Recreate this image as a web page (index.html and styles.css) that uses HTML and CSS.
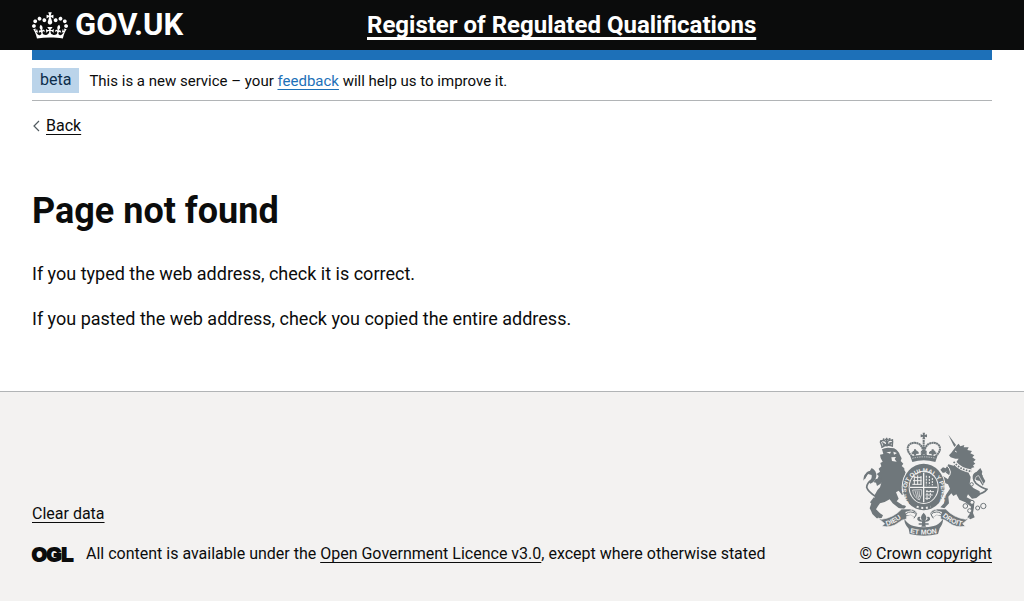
FILE: index.html
```html
<!DOCTYPE html>
<html lang="en">
<head>
<meta charset="utf-8">
<meta name="viewport" content="width=device-width, initial-scale=1">
<title>Page not found – Register of Regulated Qualifications</title>
<link rel="stylesheet" href="styles.css">
</head>
<body>
<header class="header">
  <div class="container header-row">
    <a class="logo" href="#" aria-label="GOV.UK">
      <svg class="crown" viewBox="0 0 132 97" width="36" height="27" aria-hidden="true"><path fill="currentColor" d="M25 30.2c3.5 1.5 7.7-.2 9.1-3.7 1.5-3.6-.2-7.8-3.9-9.2-3.6-1.4-7.6.3-9.1 3.9-1.4 3.5.3 7.5 3.9 9zM9 39.5c3.6 1.5 7.8-.2 9.2-3.7 1.5-3.6-.2-7.8-3.9-9.1-3.6-1.5-7.6.2-9.1 3.8-1.4 3.5.3 7.5 3.8 9zM4.4 57.2c3.5 1.5 7.7-.2 9.1-3.8 1.5-3.6-.2-7.7-3.9-9.1-3.5-1.5-7.6.3-9.1 3.8-1.4 3.5.3 7.6 3.9 9.1zm38.3-21.4c3.5 1.5 7.7-.2 9.1-3.8 1.5-3.6-.2-7.7-3.9-9.1-3.6-1.5-7.6.3-9.1 3.8-1.3 3.6.4 7.7 3.9 9.1zm64.4-5.6c-3.6 1.5-7.8-.2-9.1-3.7-1.5-3.6.2-7.8 3.8-9.2 3.6-1.4 7.7.3 9.2 3.9 1.3 3.5-.4 7.5-3.9 9zm15.9 9.3c-3.6 1.5-7.7-.2-9.1-3.7-1.5-3.6.2-7.8 3.7-9.1 3.6-1.5 7.7.2 9.2 3.8 1.5 3.5-.3 7.5-3.8 9zm4.7 17.7c-3.6 1.5-7.8-.2-9.2-3.8-1.5-3.6.2-7.7 3.9-9.1 3.6-1.5 7.7.3 9.2 3.8 1.3 3.5-.4 7.6-3.9 9.1zM89.3 35.8c-3.6 1.5-7.8-.2-9.2-3.8-1.4-3.6.2-7.7 3.9-9.1 3.6-1.5 7.7.3 9.2 3.8 1.4 3.6-.3 7.7-3.9 9.1zM69.7 17.7l8.9 4.7V9.3l-8.9 2.8c-.2-.3-.5-.6-.9-.9L72.4 0H59.6l3.5 11.2c-.3.3-.6.5-.9.9l-8.8-2.8v13.1l8.8-4.7c.3.3.6.7.9.9l-5 15.4v.1c-.2.8-.4 1.6-.4 2.4 0 4.1 3.1 7.5 7 8.1h.2c.3 0 .7.1 1 .1.4 0 .7 0 1-.1h.2c4-.6 7.1-4.1 7.1-8.1 0-.8-.1-1.7-.4-2.4V34l-5.1-15.4c.4-.2.7-.6 1-.9zM66 92.8c16.9 0 32.8 1.1 47.1 3.2 4-16.9 8.9-26.7 14-33.5l-9.6-3.4c1 4.9 1.1 7.2 0 10.2-1.5-1.4-3-4.3-4.2-8.7L108.6 76c2.8-2 5-3.2 7.5-3.3-4.4 9.4-10 11.9-13.6 11.2-4.3-.8-6.3-4.6-5.6-7.9 1-4.7 5.7-5.9 8-.5 4.3-8.7-3-11.4-7.6-8.8 7.1-7.2 7.9-13.5 2.1-21.1-8 6.1-8.1 12.3-4.5 20.8-4.7-5.4-12.1-2.5-9.5 6.2 3.4-5.2 7.9-2 7.2 3.1-.6 4.3-6.4 7.8-13.5 7.2-10.3-.9-10.9-8-11.2-13.8 2.5-.5 7.1 1.8 11 7.3L80.2 60c-4.1 4.4-8 5.3-12.3 5.4 1.4-4.4 8-11.6 8-11.6H55.5s6.4 7.2 7.9 11.6c-4.2-.1-8-1-12.3-5.4l1.4 16.4c3.9-5.5 8.5-7.7 10.9-7.3-.3 5.8-.9 12.8-11.1 13.8-7.2.6-12.9-2.9-13.5-7.2-.7-5 3.8-8.3 7.1-3.1 2.7-8.7-4.6-11.6-9.4-6.2 3.7-8.5 3.6-14.7-4.6-20.8-5.8 7.6-5 13.9 2.2 21.1-4.7-2.6-11.9.1-7.7 8.8 2.3-5.5 7.1-4.2 8.1.5.7 3.3-1.3 7.1-5.7 7.9-3.5.7-9-1.8-13.5-11.2 2.5.1 4.7 1.3 7.5 3.3l-4.7-15.4c-1.2 4.4-2.7 7.2-4.3 8.7-1.1-3-.9-5.3 0-10.2l-9.5 3.4c5 6.9 9.9 16.7 14 33.5 14.8-2.1 30.8-3.2 47.7-3.2z"/></svg>
      <span>GOV.UK</span>
    </a>
    <a class="service" href="#">Register of Regulated Qualifications</a>
  </div>
</header>
<div class="container page">
  <div class="accent"></div>
  <div class="phase">
    <strong class="tag">beta</strong>
    <span>This is a new service – your <a class="link" href="#">feedback</a> will help us to improve it.</span>
  </div>
  <a class="back" href="#">
    <svg viewBox="0 0 8 12" width="8" height="12" aria-hidden="true"><path d="M7 1 2 6l5 5" fill="none" stroke="#505a5f" stroke-width="1.2"/></svg>
    <span class="underlined">Back</span>
  </a>
  <main class="main">
    <h1>Page not found</h1>
    <p>If you typed the web address, check it is correct.</p>
    <p>If you pasted the web address, check you copied the entire address.</p>
  </main>
</div>
<footer class="footer">
  <div class="container footer-row">
    <div class="meta">
      <a class="underlined" href="#">Clear data</a>
      <div class="licence">
        <svg class="ogl" viewBox="0 0 41 17" width="41" height="17" role="img" aria-label="OGL"><text x="0" y="15">OGL</text></svg>
        <span>All content is available under the <a class="underlined" href="#">Open Government Licence v3.0</a>, except where otherwise stated</span>
      </div>
    </div>
    <a class="copyright" href="#">
      <svg class="crest" viewBox="27 18 375 312" width="125" height="104" aria-hidden="true">
        <defs>
          <path id="garter" d="M176 246A53 60 0 1 1 243 246"/>
          <path id="ribbon-left" d="M98 300Q124 293 152 268"/>
          <path id="ribbon-mid" d="M167 321Q210 330 254 321"/>
          <path id="ribbon-right" d="M265 271Q292 295 328 301"/>
        </defs>
        <!-- lion -->
        <path fill="currentColor" d="M84 70Q95 62 120 67Q134 74 138 88L143 97L140 105L148 113L143 120L151 127Q150 134 155 139L150 158L146 178Q151 190 152 204L144 207L134 194L126 199L134 218L128 226L146 238Q155 236 156 242L150 249L134 246L116 232L107 220Q96 228 78 232L72 240L66 250L78 262L87 268L83 276L68 277L55 264L51 254L47 247L51 235L63 219L62 207Q70 190 78 184L82 170L70 160L74 150L68 144L78 137L74 128L82 121L79 111L86 107L80 96L78 86L88 84Z"/>
        <path fill="none" stroke="currentColor" stroke-width="5" d="M66 212Q42 198 38 184Q39 170 53 162Q62 157 57 145Q47 132 39 142L31 158"/>
        <path fill="currentColor" d="M53 126Q68 133 67 151Q64 168 49 173L44 168Q55 159 53 147L42 144L28 164L30 150Q35 139 46 137Z"/>
        <path fill="currentColor" d="M60 213L48 229L53 234L68 221ZM83 155L64 160L59 169L66 170L69 180L82 172ZM144 179L158 187L160 194L148 196L133 186Z"/>
        <path fill="#f3f2f1" d="M97 79L111 77L108 83ZM118 77L129 81L120 86ZM112 94L126 93L122 99L128 107L114 105Z"/>
        <path fill="none" stroke="currentColor" stroke-width="4" d="M82 65Q98 54 117 61M84 62L79 48Q85 40 96 46L99 57L102 45Q112 39 116 46L115 59M98 35V48M93 40H104M86 57L112 54M84 50L92 54M106 51L114 50"/>
        <g fill="currentColor"><circle cx="81" cy="45" r="3"/><circle cx="89" cy="40" r="3"/><circle cx="107" cy="39" r="3"/><circle cx="115" cy="42" r="3"/></g>
        <!-- unicorn -->
        <path fill="currentColor" d="M283 26L306 57L301 63ZM302 67L309 58L314 53L319 61L331 57L329 64L344 64L340 72L354 75L349 82L361 88L355 94L365 101L358 107L364 113L357 118L361 124L352 126L354 139L343 139L350 153L347 174L358 186L377 196L378 207L367 216L354 218L342 205L338 214L361 226L360 244L357 261L362 274L349 280L340 274L347 264L351 242L334 229L316 221L307 205L298 210L292 202L283 212L285 232L271 247L259 244L270 232L271 214L288 188L282 175L267 169L258 157L268 151L282 160L286 148L276 140L266 140L259 131L267 124L275 127L283 115L299 119L305 111L314 98L304 98L290 94L285 88L292 80Z"/>
        <path fill="none" stroke="currentColor" stroke-width="5" d="M363 208Q391 202 399 190Q384 186 366 172Q351 155 365 143Q378 133 384 151"/>
        <path fill="currentColor" d="M368 137L379 126L385 137L383 145L390 158L394 165L386 179L377 165L363 161L356 153Q355 142 368 137Z"/>
        <path fill="none" stroke="#f3f2f1" stroke-width="2" d="M365 165Q362 150 374 149L388 174"/>
        <path fill="none" stroke="#f3f2f1" stroke-width="11" d="M299 107Q320 133 354 136"/>
        <path fill="none" stroke="currentColor" stroke-width="5" stroke-dasharray="5 4" d="M299 107Q320 133 354 136"/>
        <path fill="none" stroke="#f3f2f1" stroke-width="3" d="M303 75L308 78M277 116Q300 140 280 156M264 150L276 137M258 170L284 184"/>
        <g fill="#f3f2f1" stroke="currentColor" stroke-width="3"><circle cx="334" cy="240" r="7"/><circle cx="347" cy="254" r="6"/><circle cx="354" cy="229" r="6"/><circle cx="353" cy="175" r="5"/><circle cx="371" cy="246" r="6"/><circle cx="388" cy="240" r="8"/></g>
        <!-- shield and garter -->
        <ellipse cx="209" cy="183" rx="66" ry="73" fill="#f3f2f1"/>
        <ellipse cx="209" cy="183" rx="63" ry="70" fill="currentColor"/>
        <ellipse cx="209" cy="184" rx="45" ry="50" fill="#f3f2f1"/>
        <ellipse cx="209" cy="184" rx="42" ry="47" fill="currentColor"/>
        <path fill="none" stroke="#f3f2f1" stroke-width="4" d="M209 140V229M168 184H250"/>
        <path fill="none" stroke="#f3f2f1" stroke-width="3" d="M179 154H202M177 164H203M175 175H203M181 154V176M191 148V176M201 150V176M216 197H240M215 207H236M214 217H228"/>
        <path fill="none" stroke="#f3f2f1" stroke-width="3" stroke-dasharray="6 3" d="M217 149V178M226 150V178M235 156V178M219 192V222M229 192V215"/>
        <path fill="none" stroke="#f3f2f1" stroke-width="2" d="M176 192Q178 214 196 222L203 205V191ZM183 194L189 215M189 194L194 218M195 194L197 213"/>
        <path fill="none" stroke="#f3f2f1" stroke-width="6" stroke-dasharray="6 8" d="M188 242Q209 250 230 242"/>
        <text class="motto garter"><textPath href="#garter" startOffset="2">HONI SOIT QUI MAL Y PENSE</textPath></text>
        <!-- crown -->
        <path fill="currentColor" d="M169 91Q209 81 250 91L244 108Q209 98 175 108ZM206 20H213L212 27L219 25V34L212 32L214 40H205L207 32L200 34V25L207 27Z"/>
        <path fill="none" stroke="currentColor" stroke-width="6" stroke-dasharray="6 1" d="M174 91Q155 73 164 58Q174 47 191 52Q205 57 208 78M245 91Q264 73 255 58Q245 47 228 52Q214 57 211 78M209 42V85"/>
        <path fill="none" stroke="currentColor" stroke-width="6" d="M178 75L183 85L189 74M183 70V88M173 82L194 80M230 75L236 85L242 74M236 70V88M225 80L247 82M201 76L218 86M218 76L201 86"/>
        <path fill="none" stroke="#f3f2f1" stroke-width="2" stroke-dasharray="4 3" d="M175 97Q209 88 245 97"/>
        <!-- scroll -->
        <path fill="currentColor" stroke="#f3f2f1" stroke-width="2" d="M72 276L83 280Q119 275 143 249L168 249Q185 250 190 263L181 276L171 268L158 271L158 279Q144 280 132 291Q112 306 84 301L92 293ZM346 276L335 280Q299 275 275 249L250 249Q233 250 228 263L237 276L247 268L260 271L260 279Q274 280 286 291Q306 306 334 301L326 293Z"/>
        <path fill="#f3f2f1" d="M154 258L172 253L187 262L181 274L171 266L157 268ZM264 258L246 253L231 262L237 274L247 266L261 268Z"/>
        <path fill="none" stroke="currentColor" stroke-width="3" d="M152 272Q156 258 170 258Q182 258 187 266L180 277M266 272Q262 258 248 258Q236 258 231 266L238 277"/>
        <path fill="currentColor" d="M151 279Q164 297 179 300Q209 308 239 300Q254 297 267 279Q268 291 257 307L252 324Q210 334 167 324L164 308Q151 295 151 279Z"/>
        <path fill="currentColor" d="M209 260Q224 275 212 284Q226 280 218 273Q229 269 228 281Q223 288 214 287V292H224V296H214L216 302H202L204 296H194V292H204V287Q195 288 190 281Q189 269 200 273Q192 280 206 284Q194 275 209 260Z"/>
        <text class="motto"><textPath href="#ribbon-left" startOffset="0">DIEU</textPath></text>
        <text class="motto"><textPath href="#ribbon-mid" startOffset="1">ET MON</textPath></text>
        <text class="motto"><textPath href="#ribbon-right" startOffset="0">DROIT</textPath></text>
      </svg>
      <span class="underlined">© Crown copyright</span>
    </a>
  </div>
</footer>
</body>
</html>
```
FILE: styles.css
```css
* { box-sizing: border-box; }

body {
  margin: 0;
  background: #f3f2f1;
  color: #0b0c0c;
  font-family: Roboto, "Liberation Sans", sans-serif;
  font-size: 16px;
  line-height: 20px;
}

a { color: inherit; text-decoration: none; }

.container { max-width: 1024px; margin: 0 auto; padding: 0 32px; }

.underlined,
.link {
  text-decoration: underline 1px;
  text-underline-offset: 3px;
  text-decoration-skip-ink: none;
}

.header { background: #0b0c0c; color: #fff; }

.header-row { display: grid; grid-template-columns: 335px 1fr; align-items: center; min-height: 50px; }

.logo {
  display: flex;
  align-items: center;
  gap: 7px;
  font-size: 31px;
  font-weight: 700;
  line-height: 32px;
}

.service {
  justify-self: start;
  font-size: 24px;
  font-weight: 700;
  line-height: 30px;
  text-decoration: underline 3px;
  text-underline-offset: 4px;
  text-decoration-skip-ink: none;
}

.page { background: #fff; }
body > .page { max-width: none; }
.page > * { max-width: 960px; margin-left: auto; margin-right: auto; }

.accent { height: 10px; background: #1d70b8; }

.phase { display: flex; align-items: center; gap: 10px; padding: 8px 0 7px; border-bottom: 1px solid #b1b4b6; font-size: 15px; }

.tag { padding: 2px 8px 3px; background: #bbd4ea; color: #0c2d4a; font-size: 16px; font-weight: 400; }

.link { color: #1d70b8; }

.back { display: flex; align-items: center; gap: 6px; padding-top: 16px; line-height: 18px; }

.main { padding: 51px 0 60px; font-size: 18px; line-height: 25px; }

.main h1 { margin: 0 0 25px; font-size: 36px; font-weight: 700; line-height: 50px; }

.main p { margin: 0 0 20px; }
.main p:last-child { margin: 0; }

.footer { padding: 40px 0; border-top: 1px solid #b1b4b6; }

.footer-row { display: flex; align-items: flex-end; justify-content: space-between; gap: 30px; line-height: 18px; }

.meta { display: flex; flex-direction: column; align-items: flex-start; gap: 22px; }

.licence { display: flex; align-items: center; gap: 13px; }

.ogl { flex: none; overflow: visible; }
.ogl text { fill: currentColor; stroke: currentColor; stroke-width: 2px; font: 700 19px "Liberation Sans", sans-serif; }

.copyright { display: flex; flex-direction: column; align-items: center; gap: 9px; white-space: nowrap; }

.crest { color: #6f777b; }

.motto { fill: #f3f2f1; font: 700 21px "Liberation Sans", sans-serif; }
.garter { font-size: 18px; }
```
